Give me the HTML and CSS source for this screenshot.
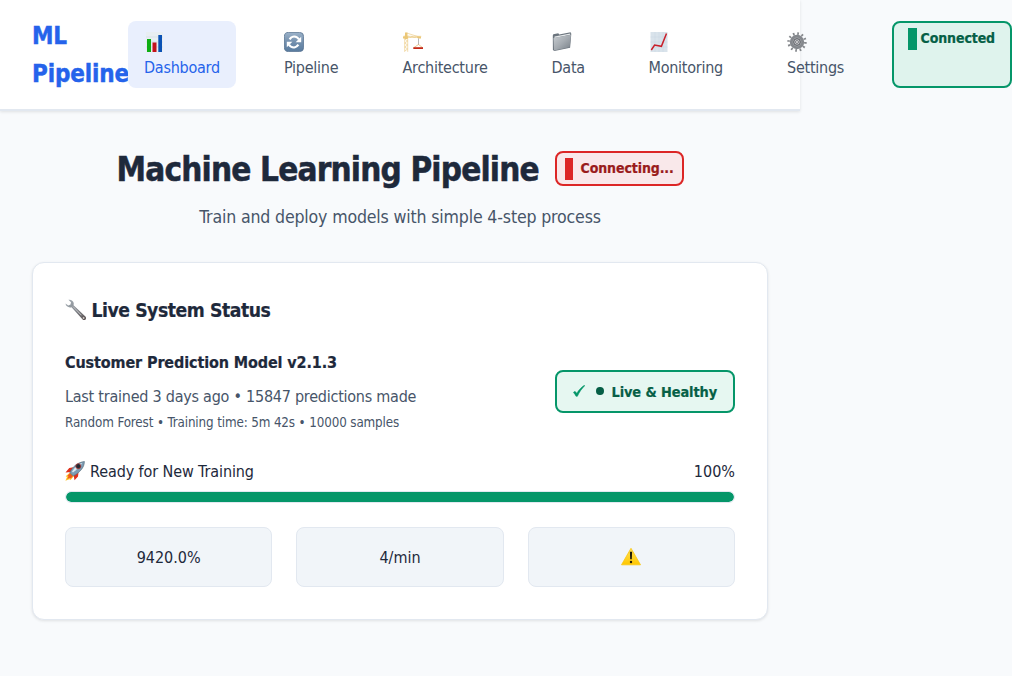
FILE: index.html
```html
<!DOCTYPE html>
<html lang="en">
<head>
<meta charset="utf-8">
<title>ML Pipeline</title>
<link rel="stylesheet" href="styles.css">
</head>
<body>
<nav class="nav">
  <div class="logo">ML Pipeline</div>
  <div class="links">
    <a class="link active w-dashboard">
      <svg class="icon" viewBox="0 0 20 20"><path fill="#e8eef2" d="M2 0h17v20H2z"/><path stroke="#cdd9e0" stroke-width=".6" d="M2 5h17M2 10h17M2 15h17"/><path fill="#0eae14" d="M3 7h4v13H3z"/><path fill="#c3131c" d="M8.500 10.500h4V20h-4z"/><path fill="#0b52b5" d="M14.300 3H18v17h-3.700z"/></svg>
      <span>Dashboard</span>
    </a>
    <a class="link w-pipeline">
      <svg class="icon" viewBox="0 0 20 20"><defs><linearGradient id="sync" x2="0" y2="1"><stop stop-color="#9bb2c9"/><stop offset=".5" stop-color="#7490ae"/><stop offset="1" stop-color="#587b9f"/></linearGradient></defs><rect x=".4" y=".4" width="19.200" height="19.200" rx="4" fill="url(#sync)" stroke="#55718f" stroke-width=".8"/><path fill="none" stroke="#fff" stroke-width="2.200" d="M5.600 7.300C7.200 4.800 10.500 4 13 5.400q1.300.8 2 2.200M14.400 12.700c-1.600 2.500-4.900 3.300-7.400 1.900q-1.300-.8-2-2.200"/><path fill="#fff" d="M17.200 4.800v5.400h-5.600zM2.800 15.200V9.800h5.600z"/></svg>
      <span>Pipeline</span>
    </a>
    <a class="link w-architecture">
      <svg class="icon" viewBox="0 0 20 20"><path fill="none" stroke="#eccf8e" stroke-width=".7" d="M1.700 4v15.800M4.700 4v15.800M1.700 7l3 2-3 2 3 2-3 2 3 2-3 2M.3 4.300h18M2 4l1.500-3L18 5.500H.3M5 3.500l2 2 2-1.300 2 1.300 2-.5"/><path fill="#ebc777" d="M2 .5h2.500V7H2zM0 4.500h5v2H0zM13.500 4.500H18V6.500h-3z"/><path stroke="#999" stroke-width=".7" d="M15.500 6.500V13"/><path fill="none" stroke="#e2b467" stroke-width=".7" d="m11 15.500 4.500-3 4 3"/><path fill="#c42a18" d="M10.300 15.200H20V17h-9.700z"/></svg>
      <span>Architecture</span>
    </a>
    <a class="link w-data">
      <svg class="icon" viewBox="0 0 20 20"><defs><linearGradient id="folder" x2="1" y2="1"><stop stop-color="#c9ced2"/><stop offset=".5" stop-color="#a5abb1"/><stop offset="1" stop-color="#767e86"/></linearGradient></defs><path fill="#6b747d" d="m.8 3.500.5-1.300 5-.9.9 1.200L18.600.3l.7 1.500-1.200 14L2.400 19 .9 18z"/><path fill="#e4e7e9" d="m2.500 4.500 15.700-3v1.200L2.500 6z"/><path fill="url(#folder)" d="m1.500 6.100 17.500-3.400-1.300 12.500L2 18.500z"/></svg>
      <span>Data</span>
    </a>
    <a class="link w-monitoring">
      <svg class="icon" viewBox="0 0 20 20"><path fill="#d9e3eb" d="M1.500 0h17v20h-17z"/><path stroke="#cbd7e1" stroke-width=".5" d="M1.500 5h17M1.500 10h17M1.500 15h17M6 0v20M10 0v20M14 0v20"/><path fill="none" stroke="#c9202b" stroke-width="1.500" d="m2.300 18 3.300-5 6.800 1.300 5.100-12.800"/></svg>
      <span>Monitoring</span>
    </a>
    <a class="link w-settings">
      <svg class="icon" viewBox="0 0 20 20"><circle cx="10" cy="10" r="8.400" fill="none" stroke="#85888c" stroke-width="2.600" stroke-dasharray="1.700 2.698"/><circle cx="10" cy="10" r="5.800" fill="#a4a6aa" stroke="#85888d" stroke-width="2.800"/><circle cx="10" cy="10" r="3.300" fill="#c4c5c9" stroke="#5b5e63"/><circle cx="10" cy="10" r="1.400" fill="#fff" stroke="#494b50" stroke-width=".7"/></svg>
      <span>Settings</span>
    </a>
    <div class="badge connected"><i class="mark"></i><span>Connected</span></div>
  </div>
</nav>
<main class="main">
  <header class="head">
    <div class="title-row">
      <h1 class="title">Machine Learning Pipeline</h1>
      <div class="badge connecting"><i class="mark"></i><span>Connecting...</span></div>
    </div>
    <p class="subtitle">Train and deploy models with simple 4-step process</p>
  </header>
  <section class="card">
    <h2 class="card-title">
      <svg class="wrench" viewBox="0 0 22 22"><defs><linearGradient id="steel" x2="1" y2="1"><stop stop-color="#a9b2b9"/><stop offset=".5" stop-color="#83888e"/><stop offset="1" stop-color="#574e4e"/></linearGradient></defs><path fill="url(#steel)" d="M3.400.8C5.600.1 8.300 1.600 8.700 4c.1.800 0 1.600-.2 2.200L20.400 17.400c1.600 1.700.1 4.500-2.300 3.500L6.500 8.200C3.800 9 .8 7.600.5 4.600L3.300 6.500 5.500 5.600 6 3.200z"/><path stroke="#c7c7c9" d="m8 7.500 8.500 8.800"/><circle cx="18.600" cy="19" r=".9" fill="#d2cac6"/></svg>
      <span>Live System Status</span>
    </h2>
    <div class="model">
      <div>
        <h3 class="model-name">Customer Prediction Model v2.1.3</h3>
        <p class="model-info">Last trained 3 days ago • 15847 predictions made</p>
        <p class="model-meta">Random Forest • Training time: 5m 42s • 10000 samples</p>
      </div>
      <div class="health">
        <svg class="check" viewBox="0 0 12 12"><path fill="#059669" stroke="#059669" stroke-width=".5" d="M.4 7.400 2 6.300l1.800 2C5.800 5 8.500 2 11.300.3l.5.500C8.700 3.500 6.400 7 4.400 11.300H3C2.300 9.700 1.500 8.500.4 7.400z"/></svg>
        <i class="dot"></i>
        <span>Live &amp; Healthy</span>
      </div>
    </div>
    <div class="progress-label">
      <span class="ready"><svg class="rocket" viewBox="0 0 20 20"><path fill="#ffc52c" d="M5 11.500.7 15.200 2 16 .4 19.700l4-1.500 1.200.8L9 15z"/><path fill="#f05a20" d="m4.800 12.300-2.300 2.500 1 .4-1.300 2.900 2.800-1.300.8.800L8 15z"/><path fill="#e0301c" d="M8.300 6.300 4.200 7 .5 11.600l5.100-.7zM13.500 11.500l-.5 4-3.500 3.800-.8-5z"/><path fill="#7d9db5" stroke="#4d6473" stroke-width=".6" d="M4.800 11.700C7 6.700 11.500 1.600 19.400.5c0 6.100-4.800 11.300-11.200 14.400z"/><path fill="#dbe8ef" d="M7 10.500C10 6 13 3 17.500 1.700 15 5 12 8.300 8 11.600z"/><circle cx="13.300" cy="5.200" r="2.500" fill="#1f2a36" stroke="#b23a34" stroke-width=".8"/></svg><span>Ready for New Training</span></span>
      <span class="percent">100%</span>
    </div>
    <div class="track"><div class="fill" style="width:100%"></div></div>
    <div class="metrics">
      <div class="metric">9420.0%</div>
      <div class="metric">4/min</div>
      <div class="metric"><svg class="icon" viewBox="0 0 20 20"><defs><linearGradient id="warn" x2="0" y2="1"><stop stop-color="#ffe25a"/><stop offset="1" stop-color="#ffc700"/></linearGradient></defs><path fill="url(#warn)" stroke="#fac710" stroke-width=".8" stroke-linejoin="round" d="M10 1.300 19.500 17.800H.5z"/><path fill="#201b08" d="M8.900 4.800h2.200l-.3 7.500H9.200z"/><circle cx="10" cy="15" r="1.200" fill="#201b08"/></svg></div>
    </div>
  </section>
</main>
</body>
</html>
```
FILE: styles.css
```css
* { box-sizing: border-box; }
body {
  margin: 0;
  background: #f8fafc;
  color: #1e293b;
  font: 16px/25.6px "DejaVu Sans Condensed", "DejaVu Sans", sans-serif;
  font-stretch: condensed;
  letter-spacing: -0.25px;
  overflow: hidden;
}
h1, h2, h3, p { margin: 0; }
svg { display: block; flex: none; }
.nav {
  width: 800px;
  display: flex;
  align-items: center;
  padding: 16px 32px;
  background: #fff;
  border-bottom: 2px solid #e2e8f0;
  box-shadow: 0 1px 3px rgba(0, 0, 0, .1);
}
.logo {
  flex: 0 0 96px;
  min-width: 0;
  height: 76.8px;
  padding-top: 1px;
  color: #2563eb;
  font-size: 24px;
  line-height: 38.4px;
  font-weight: 700;
  letter-spacing: -0.15px;
  -webkit-text-stroke: 0.4px;
}
.links { display: flex; flex: none; gap: 32px; }
.link {
  flex: none;
  height: 67.2px;
  padding: 8px 16px;
  border-radius: 8px;
  color: #475569;
  white-space: nowrap;
}
.link.active { background: #e9effd; color: #2563eb; }
.link span { display: block; }
.link .icon { margin: 3px 0 3.4px; }
.icon { width: 20px; height: 20px; }
.w-dashboard { width: 108px; }
.w-pipeline { width: 86.500px; }
.w-architecture { width: 117px; }
.w-data { width: 65px; }
.w-monitoring { width: 106.500px; }
.w-settings { width: 89px; }
.badge {
  flex: none;
  display: flex;
  border: 2px solid;
  border-radius: 8px;
  font-size: 14px;
  line-height: 22px;
  font-weight: 700;
  letter-spacing: -0.1px;
  white-space: nowrap;
  -webkit-text-stroke: 0.2px;
}
.mark { flex: none; height: 22px; }
.connected {
  width: 120px;
  padding: 5px 14px;
  gap: 3.500px;
  background: #dff3ed;
  border-color: #059669;
  color: #065f46;
}
.connected .mark { width: 9px; background: #059669; }
.badge span { position: relative; top: -1px; }
.main { width: 800px; padding: 32px; }
.title-row {
  display: flex;
  justify-content: center;
  align-items: center;
  gap: 16px;
  height: 51px;
}
.title {
  width: 422px;
  padding-top: 2px;
  font-size: 33px;
  line-height: 49px;
  letter-spacing: -0.82px;
  white-space: nowrap;
  -webkit-text-stroke: 0.5px;
}
.connecting {
  width: 129px;
  height: 35px;
  padding: 5px 8px;
  gap: 8px;
  background: #f9e8ea;
  border-color: #dc2626;
  color: #991b1b;
}
.connecting .mark { width: 8px; background: #dc2626; }
.subtitle {
  margin-top: 9px;
  color: #475569;
  font-size: 17.6px;
  line-height: 28px;
  letter-spacing: -0.17px;
  text-align: center;
}
.card {
  margin-top: 31px;
  padding: 32px;
  background: #fff;
  border: 1px solid #e2e8f0;
  border-radius: 12px;
  box-shadow: 0 1px 3px rgba(0, 0, 0, .1);
}
.card-title {
  display: flex;
  align-items: center;
  gap: 4.500px;
  font-size: 19.2px;
  line-height: 31px;
  letter-spacing: -0.45px;
  -webkit-text-stroke: 0.2px;
}
.wrench { width: 22px; height: 22px; }
.model {
  display: flex;
  justify-content: space-between;
  align-items: center;
  margin-top: 24px;
}
.model-name { font-size: 16px; line-height: 26px; letter-spacing: -0.12px; -webkit-text-stroke: 0.2px; }
.model-info { margin-top: 8px; color: #475569; line-height: 26px; letter-spacing: -0.24px; }
.model-meta { margin-top: 2px; color: #475569; font-size: 13.300px; line-height: 21px; letter-spacing: -0.13px; }
.health {
  display: flex;
  align-items: center;
  width: 180px;
  height: 43px;
  padding: 0 16px;
  border: 2px solid #059669;
  border-radius: 8px;
  background: #e6f7f1;
  color: #065f46;
  font-size: 14.400px;
  font-weight: 700;
  letter-spacing: -0.1px;
  white-space: nowrap;
  -webkit-text-stroke: 0.2px;
}
.health span { padding-top: 2px; }
.check { width: 12px; height: 12px; }
.dot { width: 8px; height: 8px; margin: 0 8px 1px 11px; border-radius: 50%; background: #065f46; }
.progress-label {
  display: flex;
  justify-content: space-between;
  margin-top: 25px;
  line-height: 27px;
}
.ready { display: flex; align-items: center; gap: 5px; letter-spacing: -0.1px; }
.rocket { width: 20px; height: 20px; }
.percent { letter-spacing: 0; }
.track {
  height: 12px;
  margin-top: 6px;
  border: 1px solid #e2e8f0;
  border-radius: 6px;
  background: #f1f5f9;
  overflow: hidden;
}
.fill { height: 100%; border-radius: 5px; background: #059669; }
.metrics { display: grid; grid-template-columns: repeat(3, 1fr); gap: 24px; margin-top: 24px; }
.metric {
  display: flex;
  justify-content: center;
  align-items: center;
  height: 60px;
  padding-top: 1.400px;
  border: 1px solid #e2e8f0;
  border-radius: 8px;
  background: #f1f5f9;
  letter-spacing: 0;
}
```
